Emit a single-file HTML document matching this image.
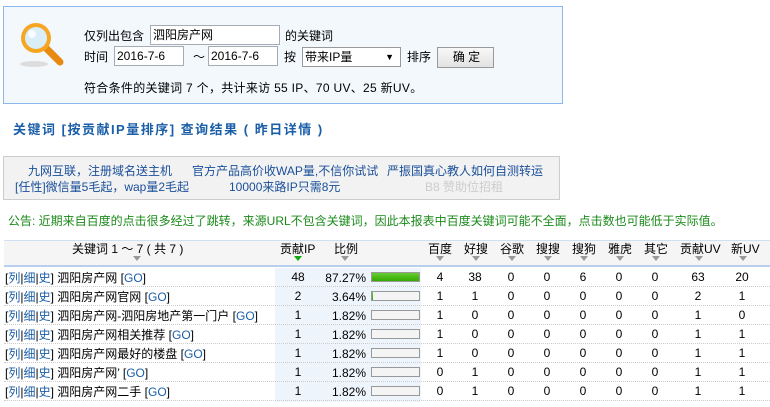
<!DOCTYPE html>
<html><head><meta charset="utf-8"><style>
*{margin:0;padding:0;box-sizing:border-box}
body{width:770px;height:407px;overflow:hidden;background:#fff;font:12px "Liberation Sans","WenQuanYi Zen Hei","Noto Sans CJK SC",sans-serif;color:#000;position:relative}
.a{position:absolute;white-space:nowrap;line-height:14px}
.box{position:absolute;left:3px;top:6px;width:560px;height:98px;background:#f3f8fd;border:1px solid #8ab8ec}
.inp{position:absolute;background:#fff;border:1px solid #a5acb5;height:20px;line-height:18px;padding-left:2px}
.lk{color:#1a5ea8;font-weight:bold;font-size:13px;letter-spacing:1.5px}
.ad{position:absolute;left:3px;top:156px;width:557px;height:44px;background:#f2f2f2;border:1px solid #ccc}
.ad span{position:absolute;color:#1a4f9a;white-space:nowrap;line-height:14px}
.hdr{position:absolute;left:4px;top:240px;width:766px;height:27px;background:#f5f5f5;border-top:1px solid #cfe0f3;border-bottom:2px solid #b8d0ee}
.shade{position:absolute;left:275px;top:268px;width:146px;height:134px;background:#eef4fb}
.row{position:absolute;left:4px;width:766px;height:19px;border-bottom:1px dotted #ccc}
.c{position:absolute;text-align:center;width:30px;line-height:19px}
.tri{position:absolute;width:0;height:0;border-left:4px solid transparent;border-right:4px solid transparent;border-top:5px solid #999}
.b{color:#1a5ea8}
.bar{position:absolute;left:371px;width:49px;height:10px;border:1px solid #999;background:#f4f4f4}
</style></head><body>
<div class="box"></div>
<svg style="position:absolute;left:16px;top:18px" width="52" height="52" viewBox="0 0 52 52">
<ellipse cx="18" cy="46" rx="14" ry="3" fill="#ddd"/>
<line x1="30" y1="30" x2="44" y2="44" stroke="#e88a10" stroke-width="7" stroke-linecap="round"/>
<circle cx="20" cy="20" r="15" fill="#f6a623"/>
<circle cx="20" cy="20" r="11" fill="#d9eef8"/>
<circle cx="16" cy="16" r="4" fill="#fff" opacity=".8"/>
</svg>
<div class="a" style="left:84px;top:29px">仅列出包含</div>
<div class="inp" style="left:150px;top:25px;width:130px">泗阳房产网</div>
<div class="a" style="left:285px;top:29px">的关键词</div>
<div class="a" style="left:84px;top:50px">时间</div>
<div class="inp" style="left:114px;top:46px;width:70px">2016-7-6</div>
<div class="a" style="left:193px;top:50px">～</div>
<div class="inp" style="left:208px;top:46px;width:70px">2016-7-6</div>
<div class="a" style="left:284px;top:50px">按</div>
<div class="inp" style="left:302px;top:47px;width:99px;border-color:#999">带来IP量<span style="position:absolute;right:6px;font-size:9px">▼</span></div>
<div class="a" style="left:407px;top:50px">排序</div>
<div class="inp" style="left:437px;top:47px;width:57px;height:21px;text-align:center;background:linear-gradient(#f8f8f8,#e2e2e2);border-color:#999">确 定</div>
<div class="a" style="left:84px;top:81px;letter-spacing:.3px">符合条件的关键词 7 个，共计来访 55 IP、70 UV、25 新UV。</div>
<div class="a lk" style="left:13px;top:123px">关键词 [按贡献IP量排序] 查询结果 ( 昨日详情 )</div>
<div class="ad">
<span style="left:24px;top:7px">九网互联，注册域名送主机</span>
<span style="left:188px;top:7px">官方产品高价收WAP量,不信你试试</span>
<span style="left:383px;top:7px">严振国真心教人如何自测转运</span>
<span style="left:11px;top:23px">[任性]微信量5毛起，wap量2毛起</span>
<span style="left:225px;top:23px">10000来路IP只需8元</span>
<span style="left:421px;top:23px;color:#ccc">B8 赞助位招租</span>
</div>
<div class="a" style="left:8px;top:214px;color:#1a8a1a">公告: 近期来自百度的点击很多经过了跳转，来源URL不包含关键词，因此本报表中百度关键词可能不全面，点击数也可能低于实际值。</div>
<div class="hdr"></div>
<div class="a" style="left:72px;top:242px">关键词 1 ～ 7 ( 共 7 )</div>
<div class="tri" style="left:133px;top:256px"></div>
<div class="a" style="left:280px;top:242px">贡献IP</div><div class="tri" style="left:294px;top:256px;border-top-color:#1a1"></div>
<div class="a" style="left:334px;top:242px">比例</div><div class="tri" style="left:341px;top:256px"></div>
<div class="a" style="left:428px;top:242px">百度</div><div class="tri" style="left:436px;top:256px"></div>
<div class="a" style="left:464px;top:242px">好搜</div><div class="tri" style="left:472px;top:256px"></div>
<div class="a" style="left:500px;top:242px">谷歌</div><div class="tri" style="left:508px;top:256px"></div>
<div class="a" style="left:536px;top:242px">搜搜</div><div class="tri" style="left:544px;top:256px"></div>
<div class="a" style="left:572px;top:242px">搜狗</div><div class="tri" style="left:580px;top:256px"></div>
<div class="a" style="left:608px;top:242px">雅虎</div><div class="tri" style="left:616px;top:256px"></div>
<div class="a" style="left:644px;top:242px">其它</div><div class="tri" style="left:652px;top:256px"></div>
<div class="a" style="left:680px;top:242px">贡献UV</div><div class="tri" style="left:695px;top:256px"></div>
<div class="a" style="left:731px;top:242px">新UV</div><div class="tri" style="left:739px;top:256px"></div>
<div class="shade"></div>
<div id="rows"></div>
<script>
var d=[["泗阳房产网",48,"87.27%",47,[4,38,0,0,6,0,0,63,20]],
["泗阳房产网官网",2,"3.64%",1,[1,1,0,0,0,0,0,2,1]],
["泗阳房产网-泗阳房地产第一门户",1,"1.82%",0,[1,0,0,0,0,0,0,1,0]],
["泗阳房产网相关推荐",1,"1.82%",0,[1,0,0,0,0,0,0,1,1]],
["泗阳房产网最好的楼盘",1,"1.82%",0,[1,0,0,0,0,0,0,1,1]],
["泗阳房产网’",1,"1.82%",0,[0,1,0,0,0,0,0,1,1]],
["泗阳房产网二手",1,"1.82%",0,[0,1,0,0,0,0,0,1,1]]];
var xs=[440,475,511,547,583,619,655,698,742],h="";
d.forEach(function(r,i){var t=268+i*19;
h+='<div class="row" style="top:'+t+'px"></div>';
h+='<div class="a" style="left:5px;top:'+(t+3)+'px">[<span class="b">列</span>|<span class="b">细</span>|<span class="b">史</span>] '+r[0]+' [<span class="b">GO</span>]</div>';
h+='<div class="c" style="left:'+(298-15)+'px;top:'+t+'px">'+r[1]+'</div>';
h+='<div class="a" style="left:300px;width:66px;text-align:right;top:'+(t+3)+'px">'+r[2]+'</div>';
h+='<div class="bar" style="top:'+(t+4)+'px">'+(r[3]?'<div style="width:'+r[3]+'px;height:8px;background:linear-gradient(#6c3,#3a0)"></div>':'')+'</div>';
r[4].forEach(function(v,j){h+='<div class="c" style="left:'+(xs[j]-15)+'px;top:'+t+'px">'+v+'</div>';});});
document.getElementById('rows').innerHTML=h;
</script>
</body></html>
